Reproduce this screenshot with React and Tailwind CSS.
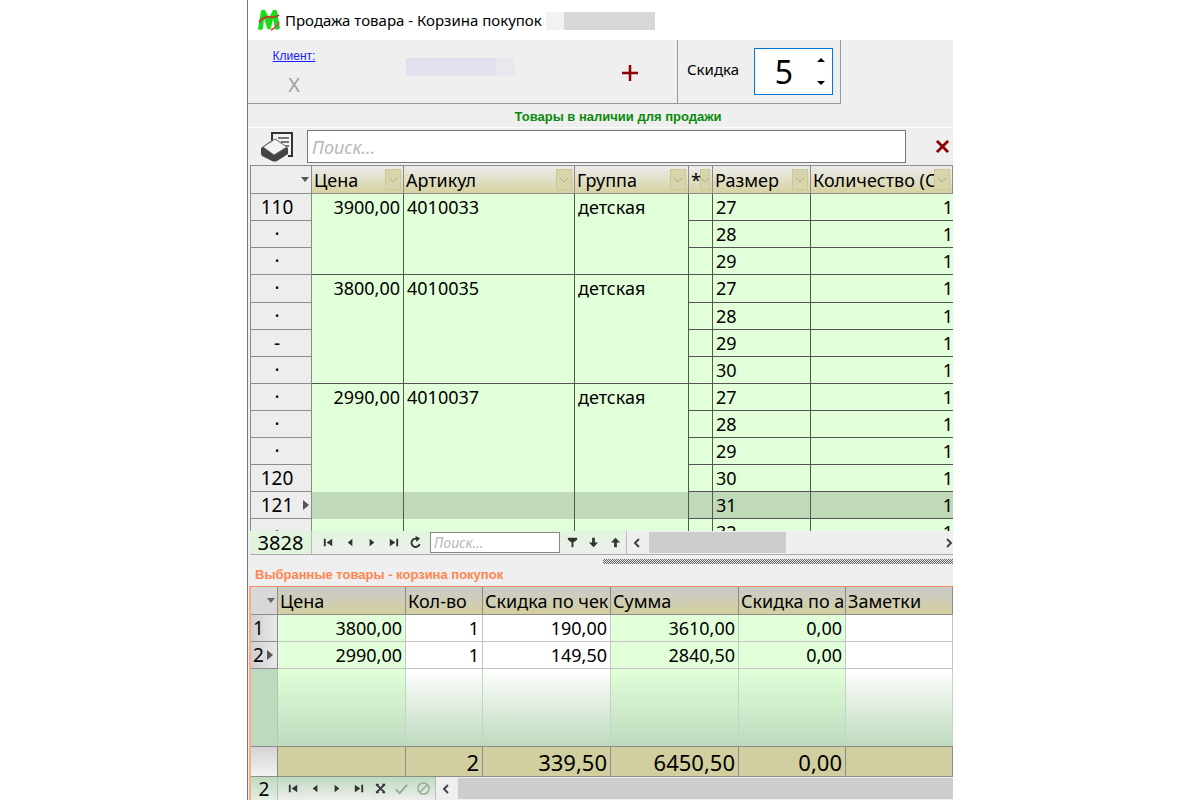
import React, { useState } from "react";

const stock = [
  { mark: "110", price: "3900,00", article: "4010033", group: "детская", size: "27", qty: "1" },
  { mark: "·", size: "28", qty: "1" },
  { mark: "·", size: "29", qty: "1", last: true },
  { mark: "·", price: "3800,00", article: "4010035", group: "детская", size: "27", qty: "1", tall: true },
  { mark: "·", size: "28", qty: "1" },
  { mark: "-", size: "29", qty: "1" },
  { mark: "·", size: "30", qty: "1", last: true },
  { mark: "·", price: "2990,00", article: "4010037", group: "детская", size: "27", qty: "1" },
  { mark: "·", size: "28", qty: "1" },
  { mark: "·", size: "29", qty: "1" },
  { mark: "120", size: "30", qty: "1" },
  { mark: "121", size: "31", qty: "1", selected: true },
  { mark: "·", size: "32", qty: "1" },
];

const cart = [
  { n: "1", price: "3800,00", qty: "1", discount: "190,00", sum: "3610,00", promo: "0,00" },
  { n: "2", price: "2990,00", qty: "1", discount: "149,50", sum: "2840,50", promo: "0,00", current: true },
];

const icons = {
  first: <path d="M2 3h2v8H2zM11 3v8L5 7z" />,
  prev: <path d="M9 3v8L4 7z" />,
  next: <path d="M5 3v8l5-4z" />,
  last: <path d="M10 3h2v8h-2zM3 3v8l6-4z" />,
  filter: <path d="M2 2h10v2L8 7v5H6V7L2 4z" />,
  down: <path d="M5.500 2h3v5H12l-5 5-5-5h3.500z" />,
  up: <path d="M5.500 12h3V7H12L7 2 2 7h3.500z" />,
  refresh: (
    <>
      <path d="M11.500 8.500A4.500 4.500 0 1 1 8.500 3" fill="none" stroke="currentColor" strokeWidth="2" />
      <path d="M7 0l5 2.500-4 4z" />
    </>
  ),
  remove: <path d="M3 3l8 8M11 3l-8 8M2 3h3M9 3h3M2 11h3M9 11h3" stroke="currentColor" strokeWidth="2" />,
  check: <path d="M1 8l4 4 8-9" fill="none" stroke="currentColor" strokeWidth="2" />,
  cancel: (
    <g fill="none" stroke="currentColor" strokeWidth="1.500">
      <circle cx="7" cy="7" r="6" />
      <path d="M11 3l-8 8" />
    </g>
  ),
};

function NavButton({ icon, label, muted }) {
  return (
    <button type="button" aria-label={label} className={`flex flex-1 items-center justify-center ${muted ? "text-[#93a893]" : "text-[#333]"}`}>
      <svg viewBox="0 0 14 14" className="size-[13px]" fill="currentColor">
        {icons[icon]}
      </svg>
    </button>
  );
}

function Arrow({ dir }) {
  return (
    <svg viewBox="0 0 8 12" className="h-3 w-2" fill="none" stroke="#444" strokeWidth="2">
      <path d={dir === "left" ? "M6 2L2 6l4 4" : "M2 2l4 4-4 4"} />
    </svg>
  );
}

function StockHead({ children, narrow }) {
  return (
    <th className="relative overflow-hidden border-r border-b border-[#8c8c8c] bg-linear-to-b from-[#ececec] to-[#d6d2a0] pl-[2px] text-left font-normal whitespace-nowrap">
      <button
        type="button"
        aria-label="Фильтр"
        className={`absolute top-[3px] right-[2px] flex h-[21px] items-center justify-center overflow-hidden border border-[#cbc898] bg-[#d8d5ac] ${narrow ? "w-[10px]" : "w-4"}`}
      >
        <svg viewBox="0 0 10 6" className="h-[6px] w-[10px] shrink-0" fill="none" stroke="#b0ad84" strokeWidth="1">
          <path d="M1 1l4 4 4-4" />
        </svg>
      </button>
      <span className={narrow ? "relative" : ""}>{children}</span>
    </th>
  );
}

function CartHead({ children }) {
  return (
    <th className="overflow-hidden border-r border-b border-[#8c8c8c] bg-linear-to-b from-[#cbcbcb] to-[#d3cf9f] pl-[2px] text-left font-normal whitespace-nowrap">
      {children}
    </th>
  );
}

function StockTable() {
  return (
    <div className="ml-[2px] h-[366px] overflow-hidden border-t border-l border-[#8c8c8c]">
      <table className="w-full table-fixed border-separate border-spacing-0 text-[18px] leading-[26px]">
        <colgroup>
          <col className="w-[61px]" />
          <col className="w-[92px]" />
          <col className="w-[171px]" />
          <col className="w-[114px]" />
          <col className="w-[24px]" />
          <col className="w-[98px]" />
          <col />
        </colgroup>
        <thead>
          <tr className="h-[28px]">
            <th className="border-r border-b border-[#8c8c8c] bg-[#ededed]">
              <svg viewBox="0 0 8 5" className="mr-[2px] ml-auto h-[5px] w-2" fill="#555">
                <path d="M0 0h8L4 5z" />
              </svg>
            </th>
            <StockHead>Цена</StockHead>
            <StockHead>Артикул</StockHead>
            <StockHead>Группа</StockHead>
            <StockHead narrow>*</StockHead>
            <StockHead>Размер</StockHead>
            <StockHead>Количество (С</StockHead>
          </tr>
        </thead>
        <tbody className="align-top">
          {stock.map((row, i) => {
            const bg = row.selected ? "bg-[#c0d9b8]" : "bg-[#e1ffd9]";
            const merged = `border-r border-[#555] px-[3px] ${row.last ? "border-b" : ""} ${bg}`;
            const cell = `border-r border-b border-[#555] px-[3px] ${bg}`;
            return (
              <tr key={i} className={row.tall ? "h-[28px]" : "h-[27px]"}>
                <th className="border-r border-b border-[#8c8c8c] bg-[#ededed] p-0 text-[19px] font-normal">
                  <div className="flex h-[26px] items-center">
                    <span className="w-[52px] text-center">{row.mark}</span>
                    {row.selected && (
                      <svg viewBox="0 0 6 10" className="h-[10px] w-[6px]" fill="#555">
                        <path d="M0 0v10l6-5z" />
                      </svg>
                    )}
                  </div>
                </th>
                <td className={`${merged} text-right`}>{row.price}</td>
                <td className={merged}>{row.article}</td>
                <td className={merged}>{row.group}</td>
                <td className={cell}></td>
                <td className={cell}>{row.size}</td>
                <td className={`border-b border-[#555] text-right ${bg}`}>{row.qty}</td>
              </tr>
            );
          })}
        </tbody>
      </table>
    </div>
  );
}

function CartTable() {
  const green = "border-r border-b border-[#c4c4c4] bg-[#e1ffd9] px-[3px]";
  const white = "border-r border-b border-[#c4c4c4] bg-white px-[3px]";
  const fillGreen = "border-r border-[#c4d4c4] bg-linear-to-b from-[#e1ffd9] to-[#bedabe]";
  const fillWhite = "border-r border-[#c4d4c4] bg-linear-to-b from-white to-[#bedabe]";
  const total = "border-t border-r border-b border-[#8c8c8c] bg-[#d1ce9f] px-[3px]";
  return (
    <table className="w-full table-fixed border-separate border-spacing-0 text-[18px] leading-[26px]">
      <colgroup>
        <col className="w-[27px]" />
        <col className="w-[128px]" />
        <col className="w-[77px]" />
        <col className="w-[128px]" />
        <col className="w-[128px]" />
        <col className="w-[107px]" />
        <col />
      </colgroup>
      <thead>
        <tr className="h-[28px]">
          <th className="border-r border-b border-[#8c8c8c] bg-[#d8d8d8]">
            <svg viewBox="0 0 8 5" className="mr-[2px] ml-auto h-[5px] w-2" fill="#666">
              <path d="M0 0h8L4 5z" />
            </svg>
          </th>
          <CartHead>Цена</CartHead>
          <CartHead>Кол-во</CartHead>
          <CartHead>Скидка по чек</CartHead>
          <CartHead>Сумма</CartHead>
          <CartHead>Скидка по а</CartHead>
          <CartHead>Заметки</CartHead>
        </tr>
      </thead>
      <tbody className="text-right">
        {cart.map((row) => (
          <tr key={row.n} className="h-[27px]">
            <th className="border-r border-b border-[#8c8c8c] bg-linear-to-r from-[#d0d0d0] to-[#e8e8e8] p-0 pl-[2px] text-[19px] font-normal">
              <div className="flex items-center gap-[3px]">
                {row.n}
                {row.current && (
                  <svg viewBox="0 0 6 10" className="h-[10px] w-[6px]" fill="#555">
                    <path d="M0 0v10l6-5z" />
                  </svg>
                )}
              </div>
            </th>
            <td className={green}>{row.price}</td>
            <td className={white}>{row.qty}</td>
            <td className={white}>{row.discount}</td>
            <td className={green}>{row.sum}</td>
            <td className={green}>{row.promo}</td>
            <td className={white}></td>
          </tr>
        ))}
        <tr className="h-[77px]">
          <td className="border-r border-[#b0c8b0] bg-[#bedabe]"></td>
          <td className={fillGreen}></td>
          <td className={fillWhite}></td>
          <td className={fillWhite}></td>
          <td className={fillGreen}></td>
          <td className={fillGreen}></td>
          <td className={fillWhite}></td>
        </tr>
      </tbody>
      <tfoot className="text-right text-[22px] leading-[28px]">
        <tr className="h-[31px]">
          <td className="border-t border-r border-b border-[#8c8c8c] bg-linear-to-b from-[#d4d4d4] to-[#f2f2f2]"></td>
          <td className={total}></td>
          <td className={total}>2</td>
          <td className={total}>339,50</td>
          <td className={total}>6450,50</td>
          <td className={total}>0,00</td>
          <td className={total}></td>
        </tr>
      </tfoot>
    </table>
  );
}

export default function App() {
  const [discount, setDiscount] = useState(5);
  const [search, setSearch] = useState("");
  const [find, setFind] = useState("");

  return (
    <div className="h-screen overflow-hidden bg-white px-[247px] font-['Noto_Sans',sans-serif] text-black">
      <div className="flex min-h-full flex-col border-l border-[#777] bg-[#efefef]">
        <header className="flex h-10 items-center bg-white pl-[10px]">
          <svg viewBox="0 0 22 22" className="h-[22px] w-[22px]">
            <path d="M0 20L3 2Q4 0 7 1L11 9L15 1Q18 0 19 2L22 19Q20 22 17 20L15 10L13 19Q11 22 9 19L6 9L5 20Q2 22 0 20Z" fill="#18dc1c" />
            <path d="M1 13Q7 7 12 8T21 6" fill="none" stroke="#b8402a" strokeWidth="2" />
            <path d="M21 13Q19 18 13 21" fill="none" stroke="#d8504a" strokeWidth="2" />
          </svg>
          <h1 className="ml-[5px] text-[15px] leading-[22px] whitespace-nowrap">Продажа товара - Корзина покупок</h1>
          <div className="mt-[2px] ml-[4px] h-[18px] w-[18px] bg-[#f3f2f1]"></div>
          <div className="mt-[2px] h-[18px] w-[91px] bg-[#d7d7d8]"></div>
        </header>

        <section className="flex h-16">
          <div className="flex flex-1 border-b border-[#999] pr-[39px]">
            <div className="flex w-[92px] flex-col items-center pt-[8px]">
              <a href="#client" className="font-['Liberation_Sans',Arial,sans-serif] text-[12px] leading-[16px] text-[#1a1aff] underline">
                Клиент:
              </a>
              <button type="button" className="mt-[8px] text-[20px] leading-[26px] text-[#a0a0a0]">
                X
              </button>
            </div>
            <div className="mt-[18px] ml-[66px] h-[18px] w-[90px] bg-[#e1e0ef]"></div>
            <div className="mt-[18px] h-[18px] w-[19px] bg-[#e9e8ef]"></div>
            <button type="button" aria-label="Добавить" className="mt-[25px] ml-auto h-4 w-4">
              <svg viewBox="0 0 16 16" className="size-4" stroke="#8b0000" strokeWidth="2.500">
                <path d="M8 0v16M0 8h16" />
              </svg>
            </button>
          </div>
          <div className="flex w-[164px] border-x border-b border-[#999] pl-[9px]">
            <label htmlFor="discount" className="mt-[18px] w-[67px] text-[15px] leading-[22px]">
              Скидка
            </label>
            <div className="mt-[8px] flex h-[47px] w-[79px] border border-[#0078d7] bg-white">
              <input
                id="discount"
                type="text"
                className="w-[58px] text-center text-[32px] leading-[42px] outline-none"
                value={discount}
                onChange={(e) => setDiscount(Number(e.target.value) || 0)}
              />
              <div className="flex flex-col items-center justify-between py-[9px] pl-1">
                <button type="button" aria-label="Больше" className="flex h-1 w-2" onClick={() => setDiscount(discount + 1)}>
                  <svg viewBox="0 0 8 4" className="h-1 w-2">
                    <path d="M0 4h8L4 0z" />
                  </svg>
                </button>
                <button type="button" aria-label="Меньше" className="flex h-1 w-2" onClick={() => setDiscount(discount - 1)}>
                  <svg viewBox="0 0 8 4" className="h-1 w-2">
                    <path d="M0 0h8L4 4z" />
                  </svg>
                </button>
              </div>
            </div>
          </div>
          <div className="w-[112px]"></div>
        </section>

        <h2 className="h-6 border-b border-white pl-[35px] text-center font-['Liberation_Sans',Arial,sans-serif] text-[13px] leading-[26px] font-bold text-[#0a8a0a]">
          Товары в наличии для продажи
        </h2>

        <div className="flex h-[37px] items-center pl-[12px]">
          <svg viewBox="0 0 34 32" className="mr-[13px] h-8 w-[34px]">
            <path d="M12 2h20v23H20V8z" fill="#f4f4f4" />
            <path d="M12 9V2h20v23h-4" fill="none" stroke="#333" strokeWidth="2" />
            <path d="M18 7h11M21 11h8M25 15h4" stroke="#777" strokeWidth="2" />
            <path d="M1 17L12 9l16 8v6L17 30q-2 1-5 0L2 25q-1-1-1-3z" fill="#444" />
            <path d="M3 16L15 8l12 8-13 8z" fill="#f2f2f2" stroke="#666" strokeWidth="1" />
          </svg>
          <input
            type="text"
            aria-label="Поиск"
            placeholder="Поиск..."
            className="h-[33px] min-w-0 flex-1 border border-[#777] bg-white px-[4px] text-[18px] italic outline-none placeholder:text-[#b8b8b8]"
            value={search}
            onChange={(e) => setSearch(e.target.value)}
          />
          <button type="button" aria-label="Очистить" className="flex w-[47px] justify-end pr-1" onClick={() => setSearch("")}>
            <svg viewBox="0 0 14 14" className="size-[13px]" stroke="#8b0000" strokeWidth="3">
              <path d="M1 1l12 12M13 1L1 13" />
            </svg>
          </button>
        </div>

        <StockTable />

        <div className="ml-[2px] flex h-6 border-b border-[#aaa]">
          <div className="w-[62px] shrink-0 border-r border-[#bbb] bg-[#e0f5dc] text-center text-[20px] leading-[23px]">3828</div>
          <div className="flex border-r border-[#bbb] bg-linear-to-b from-[#e2f6dd] to-[#eeeeee] pl-[6px]">
            <div className="flex w-[108px]">
              <NavButton icon="first" label="Первая" />
              <NavButton icon="prev" label="Назад" />
              <NavButton icon="next" label="Вперёд" />
              <NavButton icon="last" label="Последняя" />
              <NavButton icon="refresh" label="Обновить" />
            </div>
            <input
              type="text"
              aria-label="Найти"
              placeholder="Поиск..."
              className="mt-px ml-1 h-[21px] w-[130px] border border-[#888] bg-white px-[3px] text-[14px] italic outline-none placeholder:text-[#b8b8b8]"
              value={find}
              onChange={(e) => setFind(e.target.value)}
            />
            <div className="ml-[2px] flex w-[64px]">
              <NavButton icon="filter" label="Фильтр" />
              <NavButton icon="down" label="Вниз" />
              <NavButton icon="up" label="Вверх" />
            </div>
          </div>
          <div className="flex flex-1 items-center pl-[6px]">
            <button type="button" aria-label="Влево" className="w-4">
              <Arrow dir="left" />
            </button>
            <div className="h-[21px] w-[137px] bg-[#cdcdcd]"></div>
            <button type="button" aria-label="Вправо" className="ml-auto">
              <Arrow dir="right" />
            </button>
          </div>
        </div>

        <div className="mt-[4px] ml-[355px] h-[5px] bg-[repeating-conic-gradient(#666_0_25%,#e4e4e4_0_50%)] bg-size-[2px_2px]"></div>

        <h2 className="h-[22px] pl-[7px] font-['Liberation_Sans',Arial,sans-serif] text-[13px] leading-[22px] font-bold text-[#ff8650]">
          Выбранные товары - корзина покупок
        </h2>

        <div className="ml-px flex flex-1 flex-col border-t border-l-2 border-t-[#ff8a5c] border-l-[#ffaa88]">
          <CartTable />
          <div className="flex h-[23px]">
            <div className="w-[27px] shrink-0 border-r border-[#bbb] bg-linear-to-b from-[#bedabe] to-[#e4efe4] text-center text-[19px] leading-[24px]">2</div>
            <div className="flex w-[158px] border-r border-[#bbb] bg-linear-to-b from-[#bedabe] to-[#eeeeee] pr-px pl-[5px]">
              <NavButton icon="first" label="Первая" />
              <NavButton icon="prev" label="Назад" />
              <NavButton icon="next" label="Вперёд" />
              <NavButton icon="last" label="Последняя" />
              <NavButton icon="remove" label="Удалить" />
              <NavButton icon="check" label="Применить" muted />
              <NavButton icon="cancel" label="Отменить" muted />
            </div>
            <div className="flex flex-1 items-center pl-[6px]">
              <button type="button" aria-label="Влево" className="w-4">
                <Arrow dir="left" />
              </button>
              <div className="h-[21px] flex-1 bg-[#cdcdcd]"></div>
            </div>
          </div>
        </div>
      </div>
    </div>
  );
}
